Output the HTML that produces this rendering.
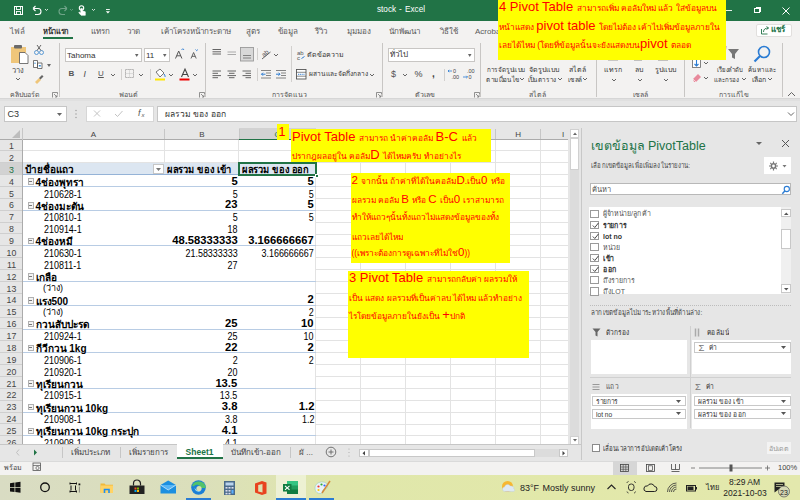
<!DOCTYPE html><html><head><meta charset="utf-8"><style>
*{box-sizing:border-box}
body{margin:0;width:800px;height:500px;overflow:hidden;position:relative;font-family:"Liberation Sans",sans-serif;background:#e6e6e6}
.ab{position:absolute}
.t{position:absolute;white-space:nowrap;line-height:1}
</style></head><body>
<div class="ab" style="left:0;top:0;width:800px;height:21px;background:#217346"></div>
<div class="t" style="left:377px;top:5.5px;font-size:8.2px;color:#fff">stock</div><div class="t" style="left:399px;top:5.5px;font-size:8.2px;color:#fff">-</div><div class="t" style="left:405px;top:5.5px;font-size:8.2px;color:#fff">Excel</div>
<div class="ab" style="left:754px;top:8px;width:5.5px;height:5px;border:1px solid #fff"></div><div class="ab" style="left:756px;top:6.5px;width:5px;height:5px;border-top:1px solid #fff;border-right:1px solid #fff"></div>
<svg class="ab" style="left:781px;top:5.5px" width="10" height="10"><path d="M1.5 1.5L8.5 8.5M8.5 1.5L1.5 8.5" stroke="#fff" stroke-width="1"/></svg>
<svg class="ab" style="left:0;top:0" width="120" height="21">
<rect x="14.5" y="6.5" width="8" height="8" fill="none" stroke="#fff" stroke-width="1"/>
<rect x="16.5" y="6.5" width="4" height="3" fill="none" stroke="#fff" stroke-width="0.9"/>
<rect x="16.5" y="11.5" width="4" height="3" fill="none" stroke="#fff" stroke-width="0.9"/>
<path d="M33 8.5h5a3 3 0 0 1 0 6h-3M33 8.5l2.5-2.5M33 8.5l2.5 2.5" fill="none" stroke="#fff" stroke-width="1.1"/>
<path d="M45 9l1.5 1.5L48 9" fill="none" stroke="#fff" stroke-width="0.8"/>
<path d="M67 8.5h-5a3 3 0 0 0 0 6h3M67 8.5l-2.5-2.5M67 8.5l-2.5 2.5" fill="none" stroke="#6fa488" stroke-width="1.1"/>
<path d="M70 9l1.5 1.5L73 9" fill="none" stroke="#6fa488" stroke-width="0.8"/>
<circle cx="81.5" cy="8" r="2.2" fill="none" stroke="#fff" stroke-width="1.1"/>
<path d="M80.8 8.5v4.5l-1.5-1l-0.5 0.8l2.3 2.5h4.2v-3.5l-3 -1v-2.3z" fill="#fff" stroke="#fff" stroke-width="0.6"/>
<path d="M92 9l1.5 1.5L95 9" fill="none" stroke="#fff" stroke-width="0.8"/>
<path d="M106 9.5h3.8" stroke="#fff" stroke-width="0.9"/><path d="M105.8 11.2h4.2l-2.1 2.2z" fill="#fff"/>
</svg>
<div class="ab" style="left:0;top:21px;width:800px;height:78px;background:#f3f2f1"></div>
<div class="t" style="left:10px;top:27.5px;font-size:8px;color:#5a5a5a">ไฟล์</div>
<div class="t" style="left:43px;top:27.5px;font-size:8px;color:#333;font-weight:bold;transform:scaleX(0.93);transform-origin:0 50%">หน้าแรก</div>
<div class="t" style="left:90.5px;top:27.5px;font-size:8px;color:#5a5a5a">แทรก</div>
<div class="t" style="left:126.5px;top:27.5px;font-size:8px;color:#5a5a5a">วาด</div>
<div class="t" style="left:161px;top:27.5px;font-size:8px;color:#5a5a5a">เค้าโครงหน้ากระดาษ</div>
<div class="t" style="left:246px;top:27.5px;font-size:8px;color:#5a5a5a">สูตร</div>
<div class="t" style="left:278px;top:27.5px;font-size:8px;color:#5a5a5a">ข้อมูล</div>
<div class="t" style="left:315px;top:27.5px;font-size:8px;color:#5a5a5a">รีวิว</div>
<div class="t" style="left:347px;top:27.5px;font-size:8px;color:#5a5a5a">มุมมอง</div>
<div class="t" style="left:389px;top:27.5px;font-size:8px;color:#5a5a5a">นักพัฒนา</div>
<div class="t" style="left:440px;top:27.5px;font-size:8px;color:#5a5a5a">วิธีใช้</div>
<div class="t" style="left:475px;top:27.5px;font-size:8px;color:#5a5a5a">Acrobat</div>
<div class="ab" style="left:42.5px;top:36.5px;width:30.5px;height:2px;background:#217346"></div>
<div class="ab" style="left:756px;top:23.5px;width:36px;height:13.5px;background:#fff;border:1px solid #e1dfdd;border-radius:2px"></div>
<svg class="ab" style="left:760px;top:25px" width="10" height="10"><path d="M1.5 4v5h6M3.5 7c0-3 2-4 5-4M6.5 1.5l2 1.5-2 1.5" fill="none" stroke="#217346" stroke-width="0.9"/></svg>
<div class="t" style="left:771px;top:26px;font-size:8px;color:#217346;font-weight:bold">แชร์</div>
<div class="ab" style="left:59px;top:43px;width:1px;height:54px;background:#c8c6c4"></div>
<div class="ab" style="left:204.5px;top:43px;width:1px;height:54px;background:#c8c6c4"></div>
<div class="ab" style="left:382px;top:43px;width:1px;height:54px;background:#c8c6c4"></div>
<div class="ab" style="left:479.5px;top:43px;width:1px;height:54px;background:#c8c6c4"></div>
<div class="ab" style="left:595.5px;top:43px;width:1px;height:54px;background:#c8c6c4"></div>
<div class="ab" style="left:684px;top:43px;width:1px;height:54px;background:#c8c6c4"></div>
<div class="ab" style="left:781.7px;top:43px;width:1px;height:54px;background:#c8c6c4"></div>
<div class="t" style="left:25px;top:91px;font-size:7px;color:#505050;transform:translateX(-50%);">คลิปบอร์ด</div>
<div class="t" style="left:128px;top:91px;font-size:7px;color:#505050;transform:translateX(-50%);">ฟอนต์</div>
<div class="t" style="left:289px;top:91px;font-size:7px;color:#505050;transform:translateX(-50%);">การจัดแนว</div>
<div class="t" style="left:425px;top:91px;font-size:7px;color:#505050;transform:translateX(-50%);">ตัวเลข</div>
<div class="t" style="left:537px;top:91px;font-size:7px;color:#505050;transform:translateX(-50%);">สไตล์</div>
<div class="t" style="left:640px;top:91px;font-size:7px;color:#505050;transform:translateX(-50%);">เซลล์</div>
<div class="t" style="left:734px;top:91px;font-size:7px;color:#505050;transform:translateX(-50%);">การแก้ไข</div>
<svg class="ab" style="left:52px;top:91.5px" width="6" height="6"><path d="M0.5 5.5v-5h5v2M2 2l3 3M5 3v2h-2" fill="none" stroke="#777" stroke-width="0.8"/></svg>
<svg class="ab" style="left:199px;top:91.5px" width="6" height="6"><path d="M0.5 5.5v-5h5v2M2 2l3 3M5 3v2h-2" fill="none" stroke="#777" stroke-width="0.8"/></svg>
<svg class="ab" style="left:376px;top:91.5px" width="6" height="6"><path d="M0.5 5.5v-5h5v2M2 2l3 3M5 3v2h-2" fill="none" stroke="#777" stroke-width="0.8"/></svg>
<svg class="ab" style="left:473.5px;top:91.5px" width="6" height="6"><path d="M0.5 5.5v-5h5v2M2 2l3 3M5 3v2h-2" fill="none" stroke="#777" stroke-width="0.8"/></svg>
<svg class="ab" style="left:0;top:40px" width="60" height="50">
<rect x="11" y="7" width="15" height="16" fill="#efc67a"/>
<rect x="14" y="5" width="8" height="3.5" rx="1" fill="#6a6a6a"/>
<path d="M19.5 12.5h5.5l3 3v8h-8.5z" fill="#fff" stroke="#555" stroke-width="0.8"/>
<path d="M34.5 12.5a2 2 0 1 0 4 0a2 2 0 1 0 -4 0M39.5 12.5a2 2 0 1 0 4 0a2 2 0 1 0 -4 0" fill="none" stroke="#4a90d0" stroke-width="0.9"/>
<path d="M37 10.5L41 5M41 10.5L37 5" stroke="#555" stroke-width="0.9"/>
<path d="M33.5 20.5h4v7h-4zM37.5 23h4.5v5.5h-4.5z" fill="#fff" stroke="#555" stroke-width="0.8"/>
<rect x="38.8" y="25" width="2" height="1.5" fill="#3b8fd6"/><rect x="34.5" y="22.5" width="1" height="1.5" fill="#3b8fd6"/>
<path d="M35 42l4 -4l2 2l-4 4z" fill="#efc67a"/><path d="M39 38l3 -3l1.5 1.5l-3 3z" fill="#666"/>
</svg>
<div class="t" style="left:17.5px;top:66.5px;font-size:7.5px;color:#444;transform:translateX(-50%);">วาง</div>
<svg class="ab" style="left:15px;top:77px" width="6" height="4"><path d="M1 1l2 2 2-2" fill="none" stroke="#555" stroke-width="0.9"/></svg>
<svg class="ab" style="left:47.0px;top:63.5px" width="4" height="3"><path d="M0 0h4l-2.0 3z" fill="#666"/></svg>
<div class="ab" style="left:65px;top:47.5px;width:76.5px;height:14px;background:#fff;border:1px solid #c8c6c4"></div>
<div class="t" style="left:67px;top:51.5px;font-size:8px;color:#333;">Tahoma</div>
<svg class="ab" style="left:135.25px;top:53.5px" width="3.5" height="3"><path d="M0 0h3.5l-1.75 3z" fill="#666"/></svg>
<div class="ab" style="left:143.5px;top:47.5px;width:26px;height:14px;background:#fff;border:1px solid #c8c6c4"></div>
<div class="t" style="left:146px;top:51.5px;font-size:8px;color:#333;">11</div>
<svg class="ab" style="left:163.25px;top:53.5px" width="3.5" height="3"><path d="M0 0h3.5l-1.75 3z" fill="#666"/></svg>
<svg class="ab" style="left:170px;top:45px" width="35" height="18">
<path d="M5.5 13.5l3.2 -7.5l3.2 7.5M6.7 10.8h4" fill="none" stroke="#555" stroke-width="1"/>
<path d="M11.5 5l1.3 -1.3l1.3 1.3" fill="none" stroke="#2b7cd3" stroke-width="0.9"/>
<path d="M21 13.5l2.6 -6l2.6 6M22 11.3h3.2" fill="none" stroke="#555" stroke-width="0.9"/>
<path d="M25.5 4.5l1.2 1.2l1.2 -1.2" fill="none" stroke="#2b7cd3" stroke-width="0.9"/>
</svg>
<div class="t" style="left:68.5px;top:70px;font-size:8px;color:#555;font-weight:bold;">B</div>
<div class="t" style="left:83.5px;top:69.5px;font-size:8.5px;color:#444;font-style:italic;font-family:"Liberation Serif",serif;font-weight:bold">I</div>
<div class="t" style="left:98px;top:70px;font-size:8px;color:#555;text-decoration:underline">U</div>
<svg class="ab" style="left:110px;top:73px" width="6" height="4"><path d="M1 1l2 2 2-2" fill="none" stroke="#555" stroke-width="0.9"/></svg>
<div class="ab" style="left:121px;top:69px;width:1px;height:11px;background:#d2d0ce"></div>
<svg class="ab" style="left:124px;top:68px" width="12" height="12"><rect x="1.5" y="1.5" width="8" height="8" fill="none" stroke="#888" stroke-width="0.8" stroke-dasharray="1.2 0.8"/><path d="M5.5 1.5v8M1.5 5.5h8" stroke="#aaa" stroke-width="0.6" stroke-dasharray="1 1"/></svg>
<svg class="ab" style="left:138px;top:73px" width="6" height="4"><path d="M1 1l2 2 2-2" fill="none" stroke="#555" stroke-width="0.9"/></svg>
<div class="ab" style="left:149.5px;top:69px;width:1px;height:11px;background:#d2d0ce"></div>
<svg class="ab" style="left:152px;top:66px" width="16" height="16"><path d="M4 6l4 -3l4 4l-4 4z" fill="#fff" stroke="#555" stroke-width="0.8"/><path d="M12 8c1 1.5 1.5 2.5 0.7 3" fill="none" stroke="#2b7cd3" stroke-width="1"/><rect x="3" y="12.5" width="10" height="2" fill="#ffe600"/></svg>
<svg class="ab" style="left:167.5px;top:73px" width="6" height="4"><path d="M1 1l2 2 2-2" fill="none" stroke="#555" stroke-width="0.9"/></svg>
<svg class="ab" style="left:178px;top:66px" width="14" height="16"><path d="M3.5 11l3.5 -8l3.5 8M4.8 8.5h4.4" fill="none" stroke="#444" stroke-width="1.1"/><rect x="1.5" y="12.5" width="10" height="2" fill="#e00"/></svg>
<svg class="ab" style="left:192px;top:73px" width="6" height="4"><path d="M1 1l2 2 2-2" fill="none" stroke="#555" stroke-width="0.9"/></svg>
<svg class="ab" style="left:205px;top:40px" width="180" height="50">
<path d="M7.5 9.5h8.5M7.5 11.8h8.5M7.5 14h8.5" stroke="#555" stroke-width="0.9"/>
<path d="M22.5 12h8.5M22.5 14.5h8.5" stroke="#aaa" stroke-width="1"/>
<rect x="35.5" y="7.5" width="13" height="13.5" fill="#d8d8d8" stroke="#9a9a9a" stroke-width="0.9"/>
<path d="M38 15.5h8M38 18h8" stroke="#777" stroke-width="0.9"/>
<path d="M7.5 31h8.5M7.5 33.3h5.5M7.5 35.6h8.5M7.5 37.7h5.5" stroke="#555" stroke-width="0.9"/>
<path d="M22.5 31h8.5M24 33.3h5.5M22.5 35.6h8.5M24 37.7h5.5" stroke="#555" stroke-width="0.9"/>
<path d="M37.5 31h8.5M40.5 33.3h5.5M37.5 35.6h8.5M40.5 37.7h5.5" stroke="#555" stroke-width="0.9"/>
<path d="M56 30.5h10M61 33h5M61 35.5h5M56 38h10" stroke="#777" stroke-width="0.9"/><path d="M56.5 34.2h4M58 32.7l-1.5 1.5l1.5 1.5" fill="none" stroke="#2b7cd3" stroke-width="1"/>
<path d="M71 30.5h10M76 33h5M76 35.5h5M71 38h10" stroke="#777" stroke-width="0.9"/><path d="M71 34.2h4M73.5 32.7l1.5 1.5l-1.5 1.5" fill="none" stroke="#2b7cd3" stroke-width="1"/>
<text x="92" y="15" font-size="6" fill="#555" font-family="Liberation Sans">ab</text>
<text x="92" y="19.5" font-size="6" fill="#555" font-family="Liberation Sans">c</text>
<path d="M96.5 18.5l3 -2" stroke="#2b7cd3" stroke-width="1"/>
<rect x="91.5" y="29.5" width="9.5" height="9.5" fill="#fff" stroke="#555" stroke-width="0.9"/>
<path d="M91.5 32.3h9.5M91.5 36.2h9.5" stroke="#555" stroke-width="0.7"/>
<path d="M93 34.3h6.5" stroke="#2b7cd3" stroke-width="0.9" stroke-dasharray="1.2 0.6"/>
</svg>
<div class="ab" style="left:256.6px;top:48px;width:1px;height:12px;background:#d2d0ce"></div>
<div class="ab" style="left:256.6px;top:68px;width:1px;height:13px;background:#d2d0ce"></div>
<div class="ab" style="left:290.8px;top:46px;width:1px;height:36px;background:#d2d0ce"></div>
<svg class="ab" style="left:259px;top:47px" width="14" height="14"><text x="2" y="9" font-size="6.5" fill="#555" font-family="Liberation Sans" transform="rotate(-40 5 6)">ab</text><path d="M3 12l8.5 -7" stroke="#555" stroke-width="0.9"/></svg>
<svg class="ab" style="left:273px;top:52.5px" width="6" height="4"><path d="M1 1l2 2 2-2" fill="none" stroke="#555" stroke-width="0.9"/></svg>
<div class="t" style="left:307px;top:51px;font-size:7px;color:#333;">ตัดข้อความ</div>
<div class="t" style="left:309px;top:71px;font-size:6.6px;color:#333;">ผสานและจัดกึ่งกลาง</div>
<svg class="ab" style="left:369px;top:73px" width="6" height="4"><path d="M1 1l2 2 2-2" fill="none" stroke="#555" stroke-width="0.9"/></svg>
<div class="ab" style="left:387.5px;top:47.5px;width:87px;height:14px;background:#fff;border:1px solid #c8c6c4"></div>
<div class="t" style="left:389.5px;top:50.5px;font-size:8px;color:#333;">ทั่วไป</div>
<svg class="ab" style="left:468.25px;top:53.5px" width="3.5" height="3"><path d="M0 0h3.5l-1.75 3z" fill="#666"/></svg>
<div class="t" style="left:391px;top:70px;font-size:9px;color:#555;">$</div>
<svg class="ab" style="left:402px;top:73px" width="6" height="4"><path d="M1 1l2 2 2-2" fill="none" stroke="#555" stroke-width="0.9"/></svg>
<div class="t" style="left:414.5px;top:70px;font-size:9px;color:#444;">%</div>
<div class="t" style="left:432px;top:69px;font-size:10px;color:#444;font-weight:bold;">,</div>
<div class="ab" style="left:443.5px;top:69px;width:1px;height:12px;background:#d2d0ce"></div>
<svg class="ab" style="left:447px;top:67px" width="30" height="14">
<text x="6" y="6" font-size="5.5" fill="#444" font-family="Liberation Sans">0</text><text x="4.5" y="11.5" font-size="5.5" fill="#444" font-family="Liberation Sans">.00</text>
<path d="M1 4h4M2.2 2.8L1 4l1.2 1.2" fill="none" stroke="#2b7cd3" stroke-width="0.8"/>
<text x="20" y="6" font-size="5.5" fill="#444" font-family="Liberation Sans">.00</text><text x="21.5" y="11.5" font-size="5.5" fill="#444" font-family="Liberation Sans">0</text>
<path d="M16 10h4.5M19.3 8.8l1.2 1.2l-1.2 1.2" fill="none" stroke="#2b7cd3" stroke-width="0.8"/>
</svg>
<div class="t" style="left:505.7px;top:66.0px;font-size:7px;color:#333;transform:translateX(-50%) scaleX(0.9);transform-origin:50% 50%;">การจัดรูปแบบ</div>
<div class="t" style="left:503px;top:75.5px;font-size:7px;color:#333;transform:translateX(-50%) scaleX(0.9);transform-origin:50% 50%;">ตามเงื่อนไข</div>
<svg class="ab" style="left:519px;top:77px" width="6" height="4"><path d="M1 1l2 2 2-2" fill="none" stroke="#555" stroke-width="0.9"/></svg>
<div class="t" style="left:544.3px;top:66.0px;font-size:7px;color:#333;transform:translateX(-50%);">จัดรูปแบบ</div>
<div class="t" style="left:541.5px;top:75.5px;font-size:7px;color:#333;transform:translateX(-50%) scaleX(0.9);transform-origin:50% 50%;">เป็นตาราง</div>
<svg class="ab" style="left:556.5px;top:77px" width="6" height="4"><path d="M1 1l2 2 2-2" fill="none" stroke="#555" stroke-width="0.9"/></svg>
<div class="t" style="left:577px;top:66.0px;font-size:7px;color:#333;transform:translateX(-50%);">สไตล์</div>
<div class="t" style="left:574.5px;top:75.5px;font-size:7px;color:#333;transform:translateX(-50%) scaleX(0.92);transform-origin:50% 50%;">เซลล์</div>
<svg class="ab" style="left:582px;top:77px" width="6" height="4"><path d="M1 1l2 2 2-2" fill="none" stroke="#555" stroke-width="0.9"/></svg>
<div class="t" style="left:613.3px;top:66.0px;font-size:7px;color:#333;transform:translateX(-50%);">แทรก</div>
<svg class="ab" style="left:610.5px;top:77.5px" width="6" height="4"><path d="M1 1l2 2 2-2" fill="none" stroke="#555" stroke-width="0.9"/></svg>
<div class="t" style="left:639.3px;top:66.0px;font-size:7px;color:#333;transform:translateX(-50%);">ลบ</div>
<svg class="ab" style="left:636.5px;top:77.5px" width="6" height="4"><path d="M1 1l2 2 2-2" fill="none" stroke="#555" stroke-width="0.9"/></svg>
<div class="t" style="left:665.8px;top:66.0px;font-size:7px;color:#333;transform:translateX(-50%);">รูปแบบ</div>
<svg class="ab" style="left:663px;top:77.5px" width="6" height="4"><path d="M1 1l2 2 2-2" fill="none" stroke="#555" stroke-width="0.9"/></svg>
<svg class="ab" style="left:600px;top:55px" width="85" height="8">
<path d="M8 5h10" stroke="#888" stroke-width="0.8"/>
<rect x="634" y="0" width="0" height="0"/>
<path d="M34 0v5h8v-5" fill="none" stroke="#777" stroke-width="0.8"/>
<path d="M58 0v5h10v-5M63 0v5" fill="none" stroke="#777" stroke-width="0.8"/>
</svg>
<svg class="ab" style="left:684px;top:40px" width="100" height="30">
<rect x="8.5" y="19.5" width="8" height="8" fill="#fff" stroke="#666" stroke-width="0.8"/>
<path d="M12.5 20v6M10.5 24l2 2l2-2" fill="none" stroke="#2b7cd3" stroke-width="1.1"/>
<path d="M44 9h11l-4 5v5l-3 -1.5v-3.5z" fill="#777"/>
<path d="M42 6l-1 8" stroke="#8e44ad" stroke-width="0.8"/>
<circle cx="80" cy="12" r="5.5" fill="none" stroke="#2b7cd3" stroke-width="1.6"/>
<path d="M76 16l-5.5 5.5" stroke="#2b7cd3" stroke-width="2.2"/>
</svg>
<svg class="ab" style="left:703px;top:61px" width="6" height="4"><path d="M1 1l2 2 2-2" fill="none" stroke="#555" stroke-width="0.9"/></svg>
<svg class="ab" style="left:690px;top:71px" width="14" height="12"><path d="M3 8l5 -5l3 3l-5 5h-2z" fill="#e88a9c"/><path d="M3 8l3 3" stroke="#fff" stroke-width="0.6"/></svg>
<svg class="ab" style="left:703px;top:76px" width="6" height="4"><path d="M1 1l2 2 2-2" fill="none" stroke="#555" stroke-width="0.9"/></svg>
<div class="t" style="left:729.5px;top:66.0px;font-size:7px;color:#333;transform:translateX(-50%) scaleX(0.85);transform-origin:50% 50%;">เรียงลำดับ</div>
<div class="t" style="left:726px;top:75.5px;font-size:7px;color:#333;transform:translateX(-50%) scaleX(0.88);transform-origin:50% 50%;">และกรอง</div>
<svg class="ab" style="left:741px;top:77px" width="6" height="4"><path d="M1 1l2 2 2-2" fill="none" stroke="#555" stroke-width="0.9"/></svg>
<div class="t" style="left:762px;top:66.0px;font-size:7px;color:#333;transform:translateX(-50%) scaleX(0.88);transform-origin:50% 50%;">ค้นหาและ</div>
<div class="t" style="left:759px;top:75.5px;font-size:7px;color:#333;transform:translateX(-50%);">เลือก</div>
<svg class="ab" style="left:767px;top:77px" width="6" height="4"><path d="M1 1l2 2 2-2" fill="none" stroke="#555" stroke-width="0.9"/></svg>
<svg class="ab" style="left:787px;top:91px" width="9" height="6"><path d="M1 5l3.5 -3.5l3.5 3.5" fill="none" stroke="#555" stroke-width="0.9"/></svg>
<div class="ab" style="left:0;top:98px;width:800px;height:1px;background:#d6d6d6"></div>
<div class="ab" style="left:0;top:99px;width:800px;height:2px;background:#e0e0e0"></div>
<div class="ab" style="left:3.5px;top:106px;width:63px;height:15.5px;background:#fff;border:1px solid #c6c6c6"></div>
<div class="t" style="left:7.5px;top:110px;font-size:9px;color:#333;">C3</div>
<svg class="ab" style="left:56.5px;top:112.5px" width="5" height="3"><path d="M0 0h5l-2.5 3z" fill="#666"/></svg>
<svg class="ab" style="left:74px;top:108px" width="4" height="12"><circle cx="2" cy="2.5" r="0.7" fill="#999"/><circle cx="2" cy="6" r="0.7" fill="#999"/><circle cx="2" cy="9.5" r="0.7" fill="#999"/></svg>
<div class="ab" style="left:85.5px;top:106px;width:68.5px;height:15.5px;background:#fff;border:1px solid #d6d6d6"></div>
<svg class="ab" style="left:92px;top:109px" width="60" height="10"><path d="M2 1.5l6 6M8 1.5l-6 6" stroke="#bbb" stroke-width="0.9"/><path d="M23 5l2.5 2.5l5 -5.5" fill="none" stroke="#bbb" stroke-width="0.9"/></svg>
<div class="t" style="left:138px;top:109px;font-size:9px;color:#555;font-style:italic;font-family:"Liberation Serif",serif">f</div>
<div class="t" style="left:141.5px;top:112px;font-size:6px;color:#555;font-style:italic;font-family:"Liberation Serif",serif">x</div>
<div class="ab" style="left:156.5px;top:106px;width:640.5px;height:15.5px;background:#fff;border:1px solid #c6c6c6"></div>
<div class="t" style="left:165px;top:110px;font-size:8.5px;color:#333;">ผลรวม ของ ออก</div>
<svg class="ab" style="left:787px;top:111px" width="8" height="6"><path d="M1 1.5l3 3l3 -3" fill="none" stroke="#555" stroke-width="0.9"/></svg>
<div class="ab" style="left:22.5px;top:139.5px;width:545.0px;height:304.7px;background:#fff;overflow:hidden" id="grid">
<div class="ab" style="left:0;top:10.88px;width:567.5px;height:1px;background:#e3e3e3"></div>
<div class="ab" style="left:0;top:22.75px;width:567.5px;height:1px;background:#e3e3e3"></div>
<div class="ab" style="left:0;top:34.62px;width:567.5px;height:1px;background:#e3e3e3"></div>
<div class="ab" style="left:0;top:46.50px;width:567.5px;height:1px;background:#e3e3e3"></div>
<div class="ab" style="left:0;top:58.38px;width:567.5px;height:1px;background:#e3e3e3"></div>
<div class="ab" style="left:0;top:70.25px;width:567.5px;height:1px;background:#e3e3e3"></div>
<div class="ab" style="left:0;top:82.12px;width:567.5px;height:1px;background:#e3e3e3"></div>
<div class="ab" style="left:0;top:94.00px;width:567.5px;height:1px;background:#e3e3e3"></div>
<div class="ab" style="left:0;top:105.88px;width:567.5px;height:1px;background:#e3e3e3"></div>
<div class="ab" style="left:0;top:117.75px;width:567.5px;height:1px;background:#e3e3e3"></div>
<div class="ab" style="left:0;top:129.62px;width:567.5px;height:1px;background:#e3e3e3"></div>
<div class="ab" style="left:0;top:141.50px;width:567.5px;height:1px;background:#e3e3e3"></div>
<div class="ab" style="left:0;top:153.38px;width:567.5px;height:1px;background:#e3e3e3"></div>
<div class="ab" style="left:0;top:165.25px;width:567.5px;height:1px;background:#e3e3e3"></div>
<div class="ab" style="left:0;top:177.12px;width:567.5px;height:1px;background:#e3e3e3"></div>
<div class="ab" style="left:0;top:189.00px;width:567.5px;height:1px;background:#e3e3e3"></div>
<div class="ab" style="left:0;top:200.88px;width:567.5px;height:1px;background:#e3e3e3"></div>
<div class="ab" style="left:0;top:212.75px;width:567.5px;height:1px;background:#e3e3e3"></div>
<div class="ab" style="left:0;top:224.62px;width:567.5px;height:1px;background:#e3e3e3"></div>
<div class="ab" style="left:0;top:236.50px;width:567.5px;height:1px;background:#e3e3e3"></div>
<div class="ab" style="left:0;top:248.38px;width:567.5px;height:1px;background:#e3e3e3"></div>
<div class="ab" style="left:0;top:260.25px;width:567.5px;height:1px;background:#e3e3e3"></div>
<div class="ab" style="left:0;top:272.12px;width:567.5px;height:1px;background:#e3e3e3"></div>
<div class="ab" style="left:0;top:284.00px;width:567.5px;height:1px;background:#e3e3e3"></div>
<div class="ab" style="left:0;top:295.88px;width:567.5px;height:1px;background:#e3e3e3"></div>
<div class="ab" style="left:0;top:307.75px;width:567.5px;height:1px;background:#e3e3e3"></div>
<div class="ab" style="left:141.00px;top:0;width:1px;height:400px;background:#e3e3e3"></div>
<div class="ab" style="left:215.50px;top:0;width:1px;height:400px;background:#e3e3e3"></div>
<div class="ab" style="left:292.10px;top:0;width:1px;height:400px;background:#e3e3e3"></div>
<div class="ab" style="left:337.10px;top:0;width:1px;height:400px;background:#e3e3e3"></div>
<div class="ab" style="left:382.00px;top:0;width:1px;height:400px;background:#e3e3e3"></div>
<div class="ab" style="left:427.00px;top:0;width:1px;height:400px;background:#e3e3e3"></div>
<div class="ab" style="left:472.10px;top:0;width:1px;height:400px;background:#e3e3e3"></div>
<div class="ab" style="left:517.10px;top:0;width:1px;height:400px;background:#e3e3e3"></div>
<div class="ab" style="left:562.10px;top:0;width:1px;height:400px;background:#e3e3e3"></div>
<div class="ab" style="left:0;top:34.62px;width:292.1px;height:275.12px;background:#fff"></div>
</div>
<div class="ab" style="left:22.5px;top:162.75px;width:293.1px;height:11.88px;background:#dce6f1;border-bottom:1px solid #95b3d7"></div>
<div class="ab" style="left:22.5px;top:186.00px;width:293.1px;height:1px;background:#b8cce4"></div>
<div class="ab" style="left:27.5px;top:178.32px;width:6.5px;height:6.5px;border:1px solid #b0b0b0;background:#f4f4f4"></div>
<div class="ab" style="left:29.2px;top:181.03px;width:3px;height:1px;background:#777"></div>
<div class="t" style="left:35.5px;top:177.925px;font-size:10px;color:#000;font-weight:bold;">4ช่องพุทรา</div>
<div class="t" style="right:562.50px;top:176.72px;color:#000;font-size:10.4px;font-weight:bold;transform:scaleX(1.08);transform-origin:100% 50%;">5</div>
<div class="t" style="right:486.00px;top:176.72px;color:#000;font-size:10.4px;font-weight:bold;transform:scaleX(1.08);transform-origin:100% 50%;">5</div>
<div class="t" style="left:43.5px;top:189.5px;font-size:10.4px;color:#000;transform:scaleX(0.86);transform-origin:0 50%;">210628-1</div>
<div class="t" style="right:562.50px;top:189.50px;color:#000;font-size:10.4px;transform:scaleX(0.86);transform-origin:100% 50%;">5</div>
<div class="t" style="right:486.00px;top:189.50px;color:#000;font-size:10.4px;transform:scaleX(0.86);transform-origin:100% 50%;">5</div>
<div class="ab" style="left:22.5px;top:209.75px;width:293.1px;height:1px;background:#b8cce4"></div>
<div class="ab" style="left:27.5px;top:202.07px;width:6.5px;height:6.5px;border:1px solid #b0b0b0;background:#f4f4f4"></div>
<div class="ab" style="left:29.2px;top:204.78px;width:3px;height:1px;background:#777"></div>
<div class="t" style="left:35.5px;top:201.675px;font-size:10px;color:#000;font-weight:bold;">4ช่องมะตัน</div>
<div class="t" style="right:562.50px;top:200.47px;color:#000;font-size:10.4px;font-weight:bold;transform:scaleX(1.08);transform-origin:100% 50%;">23</div>
<div class="t" style="right:486.00px;top:200.47px;color:#000;font-size:10.4px;font-weight:bold;transform:scaleX(1.08);transform-origin:100% 50%;">5</div>
<div class="t" style="left:43.5px;top:213.25px;font-size:10.4px;color:#000;transform:scaleX(0.86);transform-origin:0 50%;">210810-1</div>
<div class="t" style="right:562.50px;top:213.25px;color:#000;font-size:10.4px;transform:scaleX(0.86);transform-origin:100% 50%;">5</div>
<div class="t" style="right:486.00px;top:213.25px;color:#000;font-size:10.4px;transform:scaleX(0.86);transform-origin:100% 50%;">5</div>
<div class="t" style="left:43.5px;top:225.125px;font-size:10.4px;color:#000;transform:scaleX(0.86);transform-origin:0 50%;">210914-1</div>
<div class="t" style="right:562.50px;top:225.12px;color:#000;font-size:10.4px;transform:scaleX(0.86);transform-origin:100% 50%;">18</div>
<div class="ab" style="left:22.5px;top:245.38px;width:293.1px;height:1px;background:#b8cce4"></div>
<div class="ab" style="left:27.5px;top:237.70px;width:6.5px;height:6.5px;border:1px solid #b0b0b0;background:#f4f4f4"></div>
<div class="ab" style="left:29.2px;top:240.40px;width:3px;height:1px;background:#777"></div>
<div class="t" style="left:35.5px;top:237.3px;font-size:10px;color:#000;font-weight:bold;">4ช่องหมี</div>
<div class="t" style="right:562.50px;top:236.10px;color:#000;font-size:10.4px;font-weight:bold;transform:scaleX(1.08);transform-origin:100% 50%;">48.58333333</div>
<div class="t" style="right:486.00px;top:236.10px;color:#000;font-size:10.4px;font-weight:bold;transform:scaleX(1.08);transform-origin:100% 50%;">3.166666667</div>
<div class="t" style="left:43.5px;top:248.875px;font-size:10.4px;color:#000;transform:scaleX(0.86);transform-origin:0 50%;">210630-1</div>
<div class="t" style="right:562.50px;top:248.88px;color:#000;font-size:10.4px;transform:scaleX(0.86);transform-origin:100% 50%;">21.58333333</div>
<div class="t" style="right:486.00px;top:248.88px;color:#000;font-size:10.4px;transform:scaleX(0.86);transform-origin:100% 50%;">3.166666667</div>
<div class="t" style="left:43.5px;top:260.75px;font-size:10.4px;color:#000;transform:scaleX(0.86);transform-origin:0 50%;">210811-1</div>
<div class="t" style="right:562.50px;top:260.75px;color:#000;font-size:10.4px;transform:scaleX(0.86);transform-origin:100% 50%;">27</div>
<div class="ab" style="left:22.5px;top:281.00px;width:293.1px;height:1px;background:#b8cce4"></div>
<div class="ab" style="left:27.5px;top:273.32px;width:6.5px;height:6.5px;border:1px solid #b0b0b0;background:#f4f4f4"></div>
<div class="ab" style="left:29.2px;top:276.02px;width:3px;height:1px;background:#777"></div>
<div class="t" style="left:35.5px;top:272.925px;font-size:10px;color:#000;font-weight:bold;">เกลือ</div>
<div class="t" style="left:43px;top:284.0px;font-size:9px;color:#000;">(ว่าง)</div>
<div class="ab" style="left:22.5px;top:304.75px;width:293.1px;height:1px;background:#b8cce4"></div>
<div class="ab" style="left:27.5px;top:297.07px;width:6.5px;height:6.5px;border:1px solid #b0b0b0;background:#f4f4f4"></div>
<div class="ab" style="left:29.2px;top:299.77px;width:3px;height:1px;background:#777"></div>
<div class="t" style="left:35.5px;top:296.675px;font-size:10px;color:#000;font-weight:bold;">แรง500</div>
<div class="t" style="right:486.00px;top:295.48px;color:#000;font-size:10.4px;font-weight:bold;transform:scaleX(1.08);transform-origin:100% 50%;">2</div>
<div class="t" style="left:43px;top:307.75px;font-size:9px;color:#000;">(ว่าง)</div>
<div class="t" style="right:486.00px;top:308.25px;color:#000;font-size:10.4px;transform:scaleX(0.86);transform-origin:100% 50%;">2</div>
<div class="ab" style="left:22.5px;top:328.50px;width:293.1px;height:1px;background:#b8cce4"></div>
<div class="ab" style="left:27.5px;top:320.82px;width:6.5px;height:6.5px;border:1px solid #b0b0b0;background:#f4f4f4"></div>
<div class="ab" style="left:29.2px;top:323.52px;width:3px;height:1px;background:#777"></div>
<div class="t" style="left:35.5px;top:320.425px;font-size:10px;color:#000;font-weight:bold;">กวนสับปะรด</div>
<div class="t" style="right:562.50px;top:319.23px;color:#000;font-size:10.4px;font-weight:bold;transform:scaleX(1.08);transform-origin:100% 50%;">25</div>
<div class="t" style="right:486.00px;top:319.23px;color:#000;font-size:10.4px;font-weight:bold;transform:scaleX(1.08);transform-origin:100% 50%;">10</div>
<div class="t" style="left:43.5px;top:332.0px;font-size:10.4px;color:#000;transform:scaleX(0.86);transform-origin:0 50%;">210924-1</div>
<div class="t" style="right:562.50px;top:332.00px;color:#000;font-size:10.4px;transform:scaleX(0.86);transform-origin:100% 50%;">25</div>
<div class="t" style="right:486.00px;top:332.00px;color:#000;font-size:10.4px;transform:scaleX(0.86);transform-origin:100% 50%;">10</div>
<div class="ab" style="left:22.5px;top:352.25px;width:293.1px;height:1px;background:#b8cce4"></div>
<div class="ab" style="left:27.5px;top:344.57px;width:6.5px;height:6.5px;border:1px solid #b0b0b0;background:#f4f4f4"></div>
<div class="ab" style="left:29.2px;top:347.27px;width:3px;height:1px;background:#777"></div>
<div class="t" style="left:35.5px;top:344.175px;font-size:10px;color:#000;font-weight:bold;">กีวีกวน 1kg</div>
<div class="t" style="right:562.50px;top:342.98px;color:#000;font-size:10.4px;font-weight:bold;transform:scaleX(1.08);transform-origin:100% 50%;">22</div>
<div class="t" style="right:486.00px;top:342.98px;color:#000;font-size:10.4px;font-weight:bold;transform:scaleX(1.08);transform-origin:100% 50%;">2</div>
<div class="t" style="left:43.5px;top:355.75px;font-size:10.4px;color:#000;transform:scaleX(0.86);transform-origin:0 50%;">210906-1</div>
<div class="t" style="right:562.50px;top:355.75px;color:#000;font-size:10.4px;transform:scaleX(0.86);transform-origin:100% 50%;">2</div>
<div class="t" style="right:486.00px;top:355.75px;color:#000;font-size:10.4px;transform:scaleX(0.86);transform-origin:100% 50%;">2</div>
<div class="t" style="left:43.5px;top:367.625px;font-size:10.4px;color:#000;transform:scaleX(0.86);transform-origin:0 50%;">210920-1</div>
<div class="t" style="right:562.50px;top:367.62px;color:#000;font-size:10.4px;transform:scaleX(0.86);transform-origin:100% 50%;">20</div>
<div class="ab" style="left:22.5px;top:387.88px;width:293.1px;height:1px;background:#b8cce4"></div>
<div class="ab" style="left:27.5px;top:380.20px;width:6.5px;height:6.5px;border:1px solid #b0b0b0;background:#f4f4f4"></div>
<div class="ab" style="left:29.2px;top:382.90px;width:3px;height:1px;background:#777"></div>
<div class="t" style="left:35.5px;top:379.8px;font-size:10px;color:#000;font-weight:bold;">ทุเรียนกวน</div>
<div class="t" style="right:562.50px;top:378.60px;color:#000;font-size:10.4px;font-weight:bold;transform:scaleX(1.08);transform-origin:100% 50%;">13.5</div>
<div class="t" style="left:43.5px;top:391.375px;font-size:10.4px;color:#000;transform:scaleX(0.86);transform-origin:0 50%;">210915-1</div>
<div class="t" style="right:562.50px;top:391.38px;color:#000;font-size:10.4px;transform:scaleX(0.86);transform-origin:100% 50%;">13.5</div>
<div class="ab" style="left:22.5px;top:411.62px;width:293.1px;height:1px;background:#b8cce4"></div>
<div class="ab" style="left:27.5px;top:403.95px;width:6.5px;height:6.5px;border:1px solid #b0b0b0;background:#f4f4f4"></div>
<div class="ab" style="left:29.2px;top:406.65px;width:3px;height:1px;background:#777"></div>
<div class="t" style="left:35.5px;top:403.55px;font-size:10px;color:#000;font-weight:bold;">ทุเรียนกวน 10kg</div>
<div class="t" style="right:562.50px;top:402.35px;color:#000;font-size:10.4px;font-weight:bold;transform:scaleX(1.08);transform-origin:100% 50%;">3.8</div>
<div class="t" style="right:486.00px;top:402.35px;color:#000;font-size:10.4px;font-weight:bold;transform:scaleX(1.08);transform-origin:100% 50%;">1.2</div>
<div class="t" style="left:43.5px;top:415.125px;font-size:10.4px;color:#000;transform:scaleX(0.86);transform-origin:0 50%;">210908-1</div>
<div class="t" style="right:562.50px;top:415.12px;color:#000;font-size:10.4px;transform:scaleX(0.86);transform-origin:100% 50%;">3.8</div>
<div class="t" style="right:486.00px;top:415.12px;color:#000;font-size:10.4px;transform:scaleX(0.86);transform-origin:100% 50%;">1.2</div>
<div class="ab" style="left:22.5px;top:435.38px;width:293.1px;height:1px;background:#b8cce4"></div>
<div class="ab" style="left:27.5px;top:427.70px;width:6.5px;height:6.5px;border:1px solid #b0b0b0;background:#f4f4f4"></div>
<div class="ab" style="left:29.2px;top:430.40px;width:3px;height:1px;background:#777"></div>
<div class="t" style="left:35.5px;top:427.3px;font-size:10px;color:#000;font-weight:bold;">ทุเรียนกวน 10kg กระปุก</div>
<div class="t" style="right:562.50px;top:426.10px;color:#000;font-size:10.4px;font-weight:bold;transform:scaleX(1.08);transform-origin:100% 50%;">4.1</div>
<div class="t" style="left:43.5px;top:438.875px;font-size:10.4px;color:#000;transform:scaleX(0.86);transform-origin:0 50%;">210908-1</div>
<div class="t" style="right:562.50px;top:438.88px;color:#000;font-size:10.4px;transform:scaleX(0.86);transform-origin:100% 50%;">4.1</div>
<div class="t" style="left:25px;top:165.25px;font-size:10px;color:#000;font-weight:bold;">ป้ายชื่อแถว</div>
<div class="ab" style="left:153px;top:163.75px;width:11px;height:10.5px;background:#fff;border:1px solid #c6c6c6"></div>
<svg class="ab" style="left:156.0px;top:167.55px" width="5" height="3"><path d="M0 0h5l-2.5 3z" fill="#777"/></svg>
<div class="t" style="left:167px;top:165.25px;font-size:10px;color:#000;transform:scaleX(0.93);transform-origin:0 50%;font-weight:bold;">ผลรวม ของ เข้า</div>
<div class="t" style="left:242px;top:165.25px;font-size:10px;color:#000;transform:scaleX(0.93);transform-origin:0 50%;font-weight:bold;">ผลรวม ของ ออก</div>
<div class="ab" style="left:238.3px;top:162.25px;width:78.5px;height:13.38px;border:2px solid #217346"></div>
<div class="ab" style="left:314.5px;top:173.62px;width:4px;height:4px;background:#217346;border:1px solid #fff"></div>
<div class="ab" style="left:0;top:128px;width:567.5px;height:11.5px;background:#e6e6e6;border-bottom:1px solid #ababab"></div>
<div class="ab" style="left:239px;top:128px;width:76.6px;height:11.5px;background:#d2d2d2;border-bottom:1.5px solid #217346"></div>
<div class="ab" style="left:164.00px;top:129px;width:1px;height:10px;background:#c6c6c6"></div>
<div class="t" style="left:93.5px;top:130.5px;font-size:8px;color:#444;transform:translateX(-50%)">A</div>
<div class="ab" style="left:238.50px;top:129px;width:1px;height:10px;background:#c6c6c6"></div>
<div class="t" style="left:201.8px;top:130.5px;font-size:8px;color:#444;transform:translateX(-50%)">B</div>
<div class="ab" style="left:315.10px;top:129px;width:1px;height:10px;background:#c6c6c6"></div>
<div class="t" style="left:277.3px;top:130.5px;font-size:8px;color:#217346;transform:translateX(-50%)">C</div>
<div class="ab" style="left:360.10px;top:129px;width:1px;height:10px;background:#c6c6c6"></div>
<div class="t" style="left:338.1px;top:130.5px;font-size:8px;color:#444;transform:translateX(-50%)">D</div>
<div class="ab" style="left:405.00px;top:129px;width:1px;height:10px;background:#c6c6c6"></div>
<div class="t" style="left:383.1px;top:130.5px;font-size:8px;color:#444;transform:translateX(-50%)">E</div>
<div class="ab" style="left:450.00px;top:129px;width:1px;height:10px;background:#c6c6c6"></div>
<div class="t" style="left:428.0px;top:130.5px;font-size:8px;color:#444;transform:translateX(-50%)">F</div>
<div class="ab" style="left:495.10px;top:129px;width:1px;height:10px;background:#c6c6c6"></div>
<div class="t" style="left:473.1px;top:130.5px;font-size:8px;color:#444;transform:translateX(-50%)">G</div>
<div class="ab" style="left:540.10px;top:129px;width:1px;height:10px;background:#c6c6c6"></div>
<div class="t" style="left:518.1px;top:130.5px;font-size:8px;color:#444;transform:translateX(-50%)">H</div>
<div class="t" style="left:563.1px;top:130.5px;font-size:8px;color:#444;transform:translateX(-50%)">I</div>
<svg class="ab" style="left:12px;top:130px" width="9" height="9"><path d="M8 0v8h-8z" fill="#bdbdbd"/></svg>
<div class="ab" style="left:22px;top:128px;width:1px;height:11.5px;background:#c6c6c6"></div>
<div class="ab" style="left:0;top:139.5px;width:22.5px;height:304.7px;background:#e6e6e6;border-right:1px solid #ababab;overflow:hidden">
<div class="ab" style="left:0;top:0.00px;width:22.5px;height:11.88px;background:transparent;border-bottom:1px solid #cfcfcf"></div>
<div class="t" style="left:11.5px;top:2.60px;font-size:8.8px;color:#444;transform:translateX(-50%)">1</div>
<div class="ab" style="left:0;top:11.88px;width:22.5px;height:11.88px;background:transparent;border-bottom:1px solid #cfcfcf"></div>
<div class="t" style="left:11.5px;top:14.47px;font-size:8.8px;color:#444;transform:translateX(-50%)">2</div>
<div class="ab" style="left:0;top:23.75px;width:22.5px;height:11.88px;background:#d2d2d2;border-right:1.5px solid #217346;border-bottom:1px solid #cfcfcf"></div>
<div class="t" style="left:11.5px;top:26.35px;font-size:8.8px;color:#217346;transform:translateX(-50%)">3</div>
<div class="ab" style="left:0;top:35.62px;width:22.5px;height:11.88px;background:transparent;border-bottom:1px solid #cfcfcf"></div>
<div class="t" style="left:11.5px;top:38.23px;font-size:8.8px;color:#444;transform:translateX(-50%)">4</div>
<div class="ab" style="left:0;top:47.50px;width:22.5px;height:11.88px;background:transparent;border-bottom:1px solid #cfcfcf"></div>
<div class="t" style="left:11.5px;top:50.10px;font-size:8.8px;color:#444;transform:translateX(-50%)">5</div>
<div class="ab" style="left:0;top:59.38px;width:22.5px;height:11.88px;background:transparent;border-bottom:1px solid #cfcfcf"></div>
<div class="t" style="left:11.5px;top:61.98px;font-size:8.8px;color:#444;transform:translateX(-50%)">6</div>
<div class="ab" style="left:0;top:71.25px;width:22.5px;height:11.88px;background:transparent;border-bottom:1px solid #cfcfcf"></div>
<div class="t" style="left:11.5px;top:73.85px;font-size:8.8px;color:#444;transform:translateX(-50%)">7</div>
<div class="ab" style="left:0;top:83.12px;width:22.5px;height:11.88px;background:transparent;border-bottom:1px solid #cfcfcf"></div>
<div class="t" style="left:11.5px;top:85.72px;font-size:8.8px;color:#444;transform:translateX(-50%)">8</div>
<div class="ab" style="left:0;top:95.00px;width:22.5px;height:11.88px;background:transparent;border-bottom:1px solid #cfcfcf"></div>
<div class="t" style="left:11.5px;top:97.60px;font-size:8.8px;color:#444;transform:translateX(-50%)">9</div>
<div class="ab" style="left:0;top:106.88px;width:22.5px;height:11.88px;background:transparent;border-bottom:1px solid #cfcfcf"></div>
<div class="t" style="left:11.5px;top:109.47px;font-size:8.8px;color:#444;transform:translateX(-50%)">10</div>
<div class="ab" style="left:0;top:118.75px;width:22.5px;height:11.88px;background:transparent;border-bottom:1px solid #cfcfcf"></div>
<div class="t" style="left:11.5px;top:121.35px;font-size:8.8px;color:#444;transform:translateX(-50%)">11</div>
<div class="ab" style="left:0;top:130.62px;width:22.5px;height:11.88px;background:transparent;border-bottom:1px solid #cfcfcf"></div>
<div class="t" style="left:11.5px;top:133.22px;font-size:8.8px;color:#444;transform:translateX(-50%)">12</div>
<div class="ab" style="left:0;top:142.50px;width:22.5px;height:11.88px;background:transparent;border-bottom:1px solid #cfcfcf"></div>
<div class="t" style="left:11.5px;top:145.10px;font-size:8.8px;color:#444;transform:translateX(-50%)">13</div>
<div class="ab" style="left:0;top:154.38px;width:22.5px;height:11.88px;background:transparent;border-bottom:1px solid #cfcfcf"></div>
<div class="t" style="left:11.5px;top:156.97px;font-size:8.8px;color:#444;transform:translateX(-50%)">14</div>
<div class="ab" style="left:0;top:166.25px;width:22.5px;height:11.88px;background:transparent;border-bottom:1px solid #cfcfcf"></div>
<div class="t" style="left:11.5px;top:168.85px;font-size:8.8px;color:#444;transform:translateX(-50%)">15</div>
<div class="ab" style="left:0;top:178.12px;width:22.5px;height:11.88px;background:transparent;border-bottom:1px solid #cfcfcf"></div>
<div class="t" style="left:11.5px;top:180.72px;font-size:8.8px;color:#444;transform:translateX(-50%)">16</div>
<div class="ab" style="left:0;top:190.00px;width:22.5px;height:11.88px;background:transparent;border-bottom:1px solid #cfcfcf"></div>
<div class="t" style="left:11.5px;top:192.60px;font-size:8.8px;color:#444;transform:translateX(-50%)">17</div>
<div class="ab" style="left:0;top:201.88px;width:22.5px;height:11.88px;background:transparent;border-bottom:1px solid #cfcfcf"></div>
<div class="t" style="left:11.5px;top:204.47px;font-size:8.8px;color:#444;transform:translateX(-50%)">18</div>
<div class="ab" style="left:0;top:213.75px;width:22.5px;height:11.88px;background:transparent;border-bottom:1px solid #cfcfcf"></div>
<div class="t" style="left:11.5px;top:216.35px;font-size:8.8px;color:#444;transform:translateX(-50%)">19</div>
<div class="ab" style="left:0;top:225.62px;width:22.5px;height:11.88px;background:transparent;border-bottom:1px solid #cfcfcf"></div>
<div class="t" style="left:11.5px;top:228.22px;font-size:8.8px;color:#444;transform:translateX(-50%)">20</div>
<div class="ab" style="left:0;top:237.50px;width:22.5px;height:11.88px;background:transparent;border-bottom:1px solid #cfcfcf"></div>
<div class="t" style="left:11.5px;top:240.10px;font-size:8.8px;color:#444;transform:translateX(-50%)">21</div>
<div class="ab" style="left:0;top:249.38px;width:22.5px;height:11.88px;background:transparent;border-bottom:1px solid #cfcfcf"></div>
<div class="t" style="left:11.5px;top:251.97px;font-size:8.8px;color:#444;transform:translateX(-50%)">22</div>
<div class="ab" style="left:0;top:261.25px;width:22.5px;height:11.88px;background:transparent;border-bottom:1px solid #cfcfcf"></div>
<div class="t" style="left:11.5px;top:263.85px;font-size:8.8px;color:#444;transform:translateX(-50%)">23</div>
<div class="ab" style="left:0;top:273.12px;width:22.5px;height:11.88px;background:transparent;border-bottom:1px solid #cfcfcf"></div>
<div class="t" style="left:11.5px;top:275.73px;font-size:8.8px;color:#444;transform:translateX(-50%)">24</div>
<div class="ab" style="left:0;top:285.00px;width:22.5px;height:11.88px;background:transparent;border-bottom:1px solid #cfcfcf"></div>
<div class="t" style="left:11.5px;top:287.60px;font-size:8.8px;color:#444;transform:translateX(-50%)">25</div>
<div class="ab" style="left:0;top:296.88px;width:22.5px;height:11.88px;background:transparent;border-bottom:1px solid #cfcfcf"></div>
<div class="t" style="left:11.5px;top:299.48px;font-size:8.8px;color:#444;transform:translateX(-50%)">26</div>
</div>
<div class="ab" style="left:567.5px;top:128px;width:14px;height:332.2px;background:#e6e6e6"></div>
<div class="ab" style="left:570.4px;top:129.3px;width:9px;height:9px;background:#fff;border:1px solid #d0d0d0"></div>
<svg class="ab" style="left:572.9px;top:132px" width="4" height="3"><path d="M0 3h4l-2 -2.5z" fill="#666"/></svg>
<div class="ab" style="left:570.4px;top:138.3px;width:9px;height:32px;background:#fff;border:1px solid #d0d0d0"></div>
<div class="ab" style="left:570.4px;top:170.3px;width:9px;height:266px;background:#dcdcdc"></div>
<div class="ab" style="left:570.4px;top:436px;width:9px;height:8.5px;background:#fff;border:1px solid #d0d0d0"></div>
<svg class="ab" style="left:572.9px;top:439px" width="4" height="3"><path d="M0 0h4l-2 2.5z" fill="#666"/></svg>
<div class="ab" style="left:0;top:444.2px;width:582px;height:16.30000000000001px;background:#e6e6e6;border-top:1px solid #c6c6c6"></div>
<svg class="ab" style="left:15px;top:448px" width="25" height="9"><path d="M4 1.5l-2.5 3l2.5 3" fill="none" stroke="#bbb" stroke-width="0.9"/><path d="M19 1.5l3 3l-3 3z" fill="#217346"/></svg>
<div class="ab" style="left:62px;top:447px;width:1px;height:11px;background:#c6c6c6"></div>
<div class="ab" style="left:119.5px;top:447px;width:1px;height:11px;background:#c6c6c6"></div>
<div class="ab" style="left:290px;top:447px;width:1px;height:11px;background:#c6c6c6"></div>
<div class="t" style="left:90.5px;top:448.5px;font-size:8px;color:#444;transform:translateX(-50%);">เพิ่มประเภท</div>
<div class="t" style="left:148.5px;top:448.5px;font-size:8px;color:#444;transform:translateX(-50%);">เพิ่มรายการ</div>
<div class="ab" style="left:177px;top:444px;width:45.5px;height:15px;background:#fff;border-bottom:2px solid #217346"></div>
<div class="t" style="left:199.5px;top:448px;font-size:8.5px;color:#217346;transform:translateX(-50%);font-weight:bold;">Sheet1</div>
<div class="t" style="left:256px;top:448.5px;font-size:8px;color:#444;transform:translateX(-50%);">บันทึกเข้า-ออก</div>
<div class="t" style="left:299px;top:448.5px;font-size:8px;color:#444;">ผั ...</div>
<svg class="ab" style="left:325px;top:446px" width="12" height="12"><circle cx="6" cy="6" r="4.8" fill="none" stroke="#666" stroke-width="0.9"/><path d="M6 3.5v5M3.5 6h5" stroke="#666" stroke-width="0.9"/></svg>
<svg class="ab" style="left:347px;top:447px" width="4" height="11"><circle cx="2" cy="2" r="0.6" fill="#aaa"/><circle cx="2" cy="5.5" r="0.6" fill="#aaa"/><circle cx="2" cy="9" r="0.6" fill="#aaa"/></svg>
<div class="ab" style="left:359.4px;top:448.7px;width:208px;height:8.3px;background:#dcdcdc"></div>
<div class="ab" style="left:359.4px;top:448.7px;width:9.5px;height:8.3px;background:#fff;border:1px solid #c8c8c8"></div>
<svg class="ab" style="left:362px;top:450.7px" width="4" height="5"><path d="M3 0v4.5l-2.5 -2.25z" fill="#444"/></svg>
<div class="ab" style="left:368.7px;top:448.7px;width:166px;height:8.3px;background:#fff;border:1px solid #c8c8c8"></div>
<div class="ab" style="left:558.7px;top:448.7px;width:9px;height:8.3px;background:#fff;border:1px solid #c8c8c8"></div>
<svg class="ab" style="left:561.5px;top:450.7px" width="4" height="5"><path d="M0.5 0v4.5l2.5 -2.25z" fill="#444"/></svg>
<div class="ab" style="left:0;top:460.5px;width:800px;height:14.5px;background:#f3f2f1;border-top:1px solid #dadada"></div>
<div class="t" style="left:4px;top:464px;font-size:7px;color:#444;">พร้อม</div>
<svg class="ab" style="left:32px;top:462px" width="10" height="10"><rect x="1" y="1" width="7.5" height="7.5" fill="none" stroke="#555" stroke-width="0.8"/><path d="M1 3.5h7.5" stroke="#555" stroke-width="0.7"/><circle cx="5.5" cy="6" r="1.6" fill="none" stroke="#555" stroke-width="0.7"/></svg>
<div class="ab" style="left:613px;top:461px;width:24px;height:14px;background:#d6d6d6"></div>
<svg class="ab" style="left:600px;top:461px" width="200" height="14">
<rect x="20.5" y="3.5" width="8" height="7" fill="none" stroke="#444" stroke-width="0.8"/><path d="M20.5 6h8M20.5 8.3h8M23.2 3.5v7M25.8 3.5v7" stroke="#444" stroke-width="0.6"/>
<rect x="46.5" y="3.5" width="8" height="7" fill="none" stroke="#444" stroke-width="0.8"/><rect x="48.5" y="4.8" width="4" height="4.5" fill="none" stroke="#444" stroke-width="0.7"/>
<path d="M71.5 3v5.5h8v-5.5M71.5 10.5h8M75.5 3v5.5" fill="none" stroke="#444" stroke-width="0.8"/>
<path d="M91 7h4" stroke="#666" stroke-width="0.8"/>
<path d="M99 7h63" stroke="#777" stroke-width="0.9"/>
<rect x="129.5" y="3.5" width="3" height="7" fill="#555"/>
<path d="M165 7h5M167.5 4.5v5" stroke="#666" stroke-width="0.8"/>
</svg>
<div class="t" style="left:778px;top:464px;font-size:7.5px;color:#444;">100%</div>
<div class="ab" style="left:0;top:475px;width:800px;height:25px;background:linear-gradient(90deg,#d9dcc3 0%,#dbdfbb 25%,#e0e7ab 42%,#e2e8aa 70%,#e3e8ad 100%)"></div>
<div class="ab" style="left:276px;top:475px;width:30px;height:25px;background:rgba(255,255,255,0.45)"></div>
<div class="ab" style="left:186px;top:498px;width:25px;height:2px;background:#2b7cd3"></div>
<div class="ab" style="left:276px;top:498px;width:30px;height:2px;background:#2b7cd3"></div>
<div class="ab" style="left:308.5px;top:498px;width:25.5px;height:2px;background:#2b7cd3"></div>
<svg class="ab" style="left:0;top:475px" width="340" height="25">
<path d="M10 8.2l4.5 -0.6v4.3h-4.5zM15.3 7.5l5.2 -0.7v5.1h-5.2zM10 12.7h4.5v4.3l-4.5 -0.6zM15.3 12.7h5.2v5.1l-5.2 -0.7z" fill="#111"/>
<circle cx="45" cy="12.3" r="4.3" fill="none" stroke="#111" stroke-width="1.3"/>
<path d="M70 7.5v2M70 15.5v2M76.5 7.5v2M76.5 15.5v2M70 8.5h6.5M70 16.5h6.5M71 10.5v5M75.5 10.5v5" fill="none" stroke="#111" stroke-width="1"/><rect x="78.5" y="8.5" width="1.8" height="1.8" fill="#111"/><path d="M79.4 11.5v6" stroke="#666" stroke-width="0.7"/>
<path d="M100.5 8.5h4l1.2 1.3h7.3v8h-12.5z" fill="#f0b93a"/><rect x="100.5" y="10.5" width="12.5" height="7.5" fill="#ffd365"/><path d="M104.5 18v-3.5h4.5v3.5" fill="none" stroke="#1f8ef1" stroke-width="1.6"/>
<path d="M129.5 10.5h15v8.5h-15z" fill="#222"/><path d="M133.5 10.5v-2a3.5 3.5 0 0 1 7 0v2" fill="none" stroke="#222" stroke-width="1.2"/>
<rect x="134.5" y="12.5" width="2" height="2" fill="#f25022"/><rect x="137" y="12.5" width="2" height="2" fill="#7fba00"/><rect x="134.5" y="15" width="2" height="2" fill="#00a4ef"/><rect x="137" y="15" width="2" height="2" fill="#ffb900"/>
<path d="M160.5 10l7.7 -4.5l7.8 4.5v8.5h-15.5z" fill="#1c8fe0"/><path d="M160.5 10l7.7 5l7.8 -5" fill="#56b5f5" stroke="#fff" stroke-width="0.6"/>
<circle cx="198.5" cy="12.5" r="7.3" fill="#1b7fd6"/>
<path d="M192 10.5a7.3 7.3 0 0 1 13.8 2.5h-5.5a3.5 3.5 0 0 0-6.5-1.5z" fill="#52c36a"/>
<path d="M194.5 12.5a4 4 0 0 0 6.5 3.2a6 6 0 0 1-6.5-3.2z" fill="#9fe0f5"/>
<circle cx="199" cy="13.5" r="2.6" fill="#dcdfb4"/>
<rect x="224" y="6" width="11" height="14" fill="#4a6b8a"/><rect x="225.5" y="7.5" width="8" height="3" fill="#b9d3ee"/>
<rect x="225.5" y="12" width="2" height="1.6" fill="#dde"/><rect x="228.5" y="12" width="2" height="1.6" fill="#dde"/><rect x="231.5" y="12" width="2" height="1.6" fill="#dde"/>
<rect x="225.5" y="15" width="2" height="1.6" fill="#dde"/><rect x="228.5" y="15" width="2" height="1.6" fill="#dde"/><rect x="231.5" y="15" width="2" height="3.6" fill="#5ab0ff"/>
<rect x="225.5" y="17.8" width="2" height="1.6" fill="#dde"/><rect x="228.5" y="17.8" width="2" height="1.6" fill="#dde"/>
<path d="M255 8.5l7 -2.5l4.5 1.5v11l-4.5 1.5l-7 -2.5zM258.2 10v6.5l4.3 1v-8.5z" fill="#e8431f" fill-rule="evenodd"/>
<rect x="287" y="6" width="11" height="13" fill="#1f9d5c"/><rect x="287" y="6" width="11" height="4.5" fill="#33c481"/><rect x="287" y="14.5" width="11" height="4.5" fill="#107c41"/>
<rect x="283" y="9" width="8.5" height="7.5" fill="#107c41"/>
<path d="M285 10.8l4.5 4M289.5 10.8l-4.5 4" stroke="#fff" stroke-width="1.1"/>
<path d="M315 13c0-4 4-6.5 8-6s5.5 3.5 4 6c-1 1.5-3 0.5-4 2s0 3-2 3.5c-3 0.5-6-1.5-6-5.5z" fill="#e9f2f8" stroke="#9cb" stroke-width="0.6"/>
<circle cx="318.5" cy="11.5" r="1.1" fill="#e33"/><circle cx="321.5" cy="9.5" r="1.1" fill="#3a3"/><circle cx="324.5" cy="10.5" r="1.1" fill="#36f"/><circle cx="318.5" cy="15" r="1.1" fill="#fc0"/>
<path d="M322 18l8 -12" stroke="#d48a3a" stroke-width="1.5"/>
</svg>
<svg class="ab" style="left:500px;top:475px" width="300" height="25">
<circle cx="7.5" cy="11.5" r="5.5" fill="#f7b731"/><path d="M5 16.5c-3 0-3.5-4 -0.5-4.5c0.5-3 4.5-3.5 5.8-1c2.5-0.5 4 1 3.5 3c1.5 0.5 1 2.5 -0.5 2.5z" fill="#dfe9f2" stroke="#b8c9d8" stroke-width="0.4"/>
<path d="M107.5 14l4 -4l4 4" fill="none" stroke="#222" stroke-width="1.1"/>
<rect x="128.5" y="9" width="5.5" height="6.5" rx="2.5" fill="none" stroke="#222" stroke-width="0.9"/><path d="M127 8c0-1 1-1.5 1.5-1.5M135.5 8c0-1-1-1.5-1.5-1.5M127 16.5c0 1 1 1.5 1.5 1.5M135.5 16.5c0 1-1 1.5-1.5 1.5" fill="none" stroke="#222" stroke-width="0.8"/>
<path d="M146 16.5h8.5a2.5 2.5 0 0 0 0-5a3.8 3.8 0 0 0-7-0.5a2.8 2.8 0 0 0-1.5 5.5z" fill="none" stroke="#222" stroke-width="1"/>
<path d="M167.5 17a9 9 0 0 1 9-9M169.5 17a7 7 0 0 1 7-7M171.5 17a5 5 0 0 1 5-5M173.5 17a3 3 0 0 1 3-3" fill="none" stroke="#333" stroke-width="0.8"/>
<rect x="186.5" y="10.5" width="9" height="5.5" fill="none" stroke="#222" stroke-width="1"/><rect x="187.5" y="11.5" width="6" height="3.5" fill="#222"/><rect x="196" y="12" width="1" height="2.5" fill="#222"/>
<path d="M274.5 7.5h10v7h-6l-4 3z" fill="#222"/><path d="M276 9.5h7M276 11.5h7" stroke="#e3e6b2" stroke-width="0.7"/>
<circle cx="284" cy="16.5" r="5.5" fill="#d5d7b5" stroke="#555" stroke-width="0.7"/>
</svg>
<div class="t" style="left:520px;top:484px;font-size:9px;color:#222;">83°F</div>
<div class="t" style="left:542.5px;top:484px;font-size:9px;color:#222;">Mostly sunny</div>
<div class="t" style="left:706px;top:484px;font-size:7.5px;color:#222;">ไทย</div>
<div class="t" style="left:744.5px;top:477.5px;font-size:8.5px;color:#222;transform:translateX(-50%);">8:29 AM</div>
<div class="t" style="left:745px;top:489px;font-size:8.5px;color:#222;transform:translateX(-50%);">2021-10-03</div>
<div class="t" style="left:784px;top:488.5px;font-size:7px;color:#222;transform:translateX(-50%);">23</div>
<div class="ab" style="left:581.5px;top:122px;width:218.5px;height:338.5px;background:#e6e6e6"></div><div class="ab" style="left:581px;top:128px;width:1px;height:332px;background:#c8c8c8"></div>
<div class="t" style="left:590.5px;top:139.5px;font-size:12.5px;color:#217346;">เขตข้อมูล PivotTable</div>
<svg class="ab" style="left:756.3px;top:141.5px" width="6" height="3"><path d="M0 0h6l-3.0 3z" fill="#666"/></svg>
<svg class="ab" style="left:781px;top:138.5px" width="9" height="9"><path d="M1 1l7 7M8 1l-7 7" stroke="#555" stroke-width="1"/></svg>
<div class="t" style="left:590.5px;top:162px;font-size:7.5px;color:#444;transform:scaleX(0.81);transform-origin:0 50%;">เลือกเขตข้อมูลเพื่อเพิ่มลงในรายงาน:</div>
<div class="ab" style="left:764.3px;top:157.2px;width:27px;height:17.3px;background:#fff"></div>
<svg class="ab" style="left:768px;top:160px" width="22" height="12"><circle cx="5.5" cy="6" r="2.2" fill="none" stroke="#777" stroke-width="1.6"/><path d="M5.5 1.5v1.5M5.5 9v1.5M1 6h1.5M8.5 6h1.5M2.3 2.8l1 1M7.7 8.2l1 1M2.3 9.2l1-1M7.7 3.8l1-1" stroke="#777" stroke-width="1.2"/><path d="M14.5 5h4l-2 2.5z" fill="#777"/></svg>
<div class="ab" style="left:589.5px;top:183.3px;width:201.5px;height:12.2px;background:#fff;border:1px solid #b8b8b8"></div>
<div class="t" style="left:591.5px;top:186px;font-size:7.5px;color:#555;">ค้นหา</div>
<svg class="ab" style="left:781px;top:184.5px" width="10" height="10"><circle cx="5.8" cy="4" r="2.6" fill="none" stroke="#2b7cd3" stroke-width="1.1"/><path d="M3.8 6l-2.5 2.8" stroke="#2b7cd3" stroke-width="1.4"/></svg>
<div class="ab" style="left:589px;top:206.8px;width:202.2px;height:87.2px;background:#fff"></div>
<div class="ab" style="left:590.2px;top:209.50px;width:8.4px;height:8.4px;background:#fff;border:1px solid #9a9a9a"></div>
<div class="t" style="left:602.5px;top:210.39999999999998px;font-size:7.5px;color:#555;transform:scaleX(0.93);transform-origin:0 50%;">ผู้จำหน่าย/ลูกค้า</div>
<div class="ab" style="left:590.2px;top:220.60px;width:8.4px;height:8.4px;background:#fff;border:1px solid #9a9a9a"></div>
<svg class="ab" style="left:590.5px;top:220.80px" width="9" height="9"><path d="M1.8 4.5l2 2l3.6 -4.5" fill="none" stroke="#333" stroke-width="0.9"/></svg>
<div class="t" style="left:602.5px;top:221.49999999999997px;font-size:7.5px;color:#333;transform:scaleX(0.93);transform-origin:0 50%;font-weight:bold;">รายการ</div>
<div class="ab" style="left:590.2px;top:231.70px;width:8.4px;height:8.4px;background:#fff;border:1px solid #9a9a9a"></div>
<svg class="ab" style="left:590.5px;top:231.90px" width="9" height="9"><path d="M1.8 4.5l2 2l3.6 -4.5" fill="none" stroke="#333" stroke-width="0.9"/></svg>
<div class="t" style="left:602.5px;top:232.59999999999997px;font-size:7.5px;color:#333;transform:scaleX(0.93);transform-origin:0 50%;font-weight:bold;">lot no</div>
<div class="ab" style="left:590.2px;top:242.80px;width:8.4px;height:8.4px;background:#fff;border:1px solid #9a9a9a"></div>
<div class="t" style="left:602.5px;top:243.7px;font-size:7.5px;color:#555;transform:scaleX(0.93);transform-origin:0 50%;">หน่วย</div>
<div class="ab" style="left:590.2px;top:253.90px;width:8.4px;height:8.4px;background:#fff;border:1px solid #9a9a9a"></div>
<svg class="ab" style="left:590.5px;top:254.10px" width="9" height="9"><path d="M1.8 4.5l2 2l3.6 -4.5" fill="none" stroke="#333" stroke-width="0.9"/></svg>
<div class="t" style="left:602.5px;top:254.79999999999995px;font-size:7.5px;color:#333;transform:scaleX(0.93);transform-origin:0 50%;font-weight:bold;">เข้า</div>
<div class="ab" style="left:590.2px;top:265.00px;width:8.4px;height:8.4px;background:#fff;border:1px solid #9a9a9a"></div>
<svg class="ab" style="left:590.5px;top:265.20px" width="9" height="9"><path d="M1.8 4.5l2 2l3.6 -4.5" fill="none" stroke="#333" stroke-width="0.9"/></svg>
<div class="t" style="left:602.5px;top:265.9px;font-size:7.5px;color:#333;transform:scaleX(0.93);transform-origin:0 50%;font-weight:bold;">ออก</div>
<div class="ab" style="left:590.2px;top:276.10px;width:8.4px;height:8.4px;background:#fff;border:1px solid #9a9a9a"></div>
<div class="t" style="left:602.5px;top:276.99999999999994px;font-size:7.5px;color:#555;transform:scaleX(0.93);transform-origin:0 50%;">ถึงรายการ</div>
<div class="ab" style="left:590.2px;top:287.20px;width:8.4px;height:8.4px;background:#fff;border:1px solid #9a9a9a"></div>
<div class="t" style="left:602.5px;top:288.09999999999997px;font-size:7.5px;color:#555;transform:scaleX(0.93);transform-origin:0 50%;">ถึงLOT</div>
<div class="ab" style="left:781.3px;top:206.8px;width:10px;height:87.2px;background:#f0f0f0"></div>
<div class="ab" style="left:781.3px;top:208.8px;width:9.6px;height:8.7px;background:#fff;border:1px solid #c8c8c8"></div>
<svg class="ab" style="left:784px;top:211.5px" width="5" height="3"><path d="M0 3h4.5l-2.25 -2.5z" fill="#555"/></svg>
<div class="ab" style="left:781.3px;top:228.5px;width:9.6px;height:20.1px;background:#fff;border:1px solid #c8c8c8"></div>
<div class="ab" style="left:781.3px;top:284.4px;width:9.6px;height:8.8px;background:#fff;border:1px solid #c8c8c8"></div>
<svg class="ab" style="left:784px;top:287.5px" width="5" height="3"><path d="M0 0h4.5l-2.25 2.5z" fill="#555"/></svg>
<div class="ab" style="left:590px;top:304.5px;width:201px;height:0;border-top:1px dotted #bdbdbd"></div>
<div class="t" style="left:591px;top:309px;font-size:7.5px;color:#444;transform:scaleX(0.83);transform-origin:0 50%;">ลากเขตข้อมูลไปมาระหว่างพื้นที่ด้านล่าง:</div>
<svg class="ab" style="left:592px;top:328px" width="10" height="9"><path d="M0.5 0.5h8l-3 3.5v4.5l-2 -1v-3.5z" fill="#666"/></svg>
<div class="t" style="left:606px;top:328.5px;font-size:7.5px;color:#333;transform:scaleX(0.88);transform-origin:0 50%;">ตัวกรอง</div>
<svg class="ab" style="left:694px;top:328px" width="8" height="9"><path d="M1.5 0.5v8M4.5 0.5v8" stroke="#aaa" stroke-width="1.5"/></svg>
<div class="t" style="left:707px;top:328.5px;font-size:7.5px;color:#333;transform:scaleX(0.88);transform-origin:0 50%;">คอลัมน์</div>
<div class="ab" style="left:591px;top:340.4px;width:96.3px;height:33.6px;background:#fff"></div>
<div class="ab" style="left:692.2px;top:340.4px;width:99px;height:33.6px;background:#fff"></div>
<div class="ab" style="left:689.5px;top:326px;width:1px;height:102px;background:#d0d0d0"></div>
<div class="ab" style="left:590px;top:377px;width:201px;height:1px;background:#d0d0d0"></div>
<div class="ab" style="left:693.5px;top:341.8px;width:97.20000000000005px;height:11.5px;background:#fff;border:1px solid #c8c8c8"></div>
<div class="t" style="left:698.5px;top:342.8px;font-size:9.5px;color:#777;">Σ</div>
<div class="t" style="left:708.5px;top:343.8px;font-size:7.5px;color:#333;transform:scaleX(0.88);transform-origin:0 50%;">ค่า</div>
<svg class="ab" style="left:781.2px;top:346.05px" width="5" height="3"><path d="M0 0h5l-2.5 3z" fill="#555"/></svg>
<svg class="ab" style="left:592px;top:382.5px" width="9" height="9"><path d="M0.5 1.5h7M0.5 4h7M0.5 6.5h7" stroke="#999" stroke-width="1.1"/></svg>
<div class="t" style="left:606px;top:383px;font-size:7.5px;color:#555;transform:scaleX(0.88);transform-origin:0 50%;">แถว</div>
<div class="t" style="left:695px;top:381.5px;font-size:9.5px;color:#777;">Σ</div>
<div class="t" style="left:706px;top:383px;font-size:7.5px;color:#333;transform:scaleX(0.88);transform-origin:0 50%;">ค่า</div>
<div class="ab" style="left:591px;top:394.3px;width:96.3px;height:34.3px;background:#fff"></div>
<div class="ab" style="left:692.2px;top:394.3px;width:99px;height:34.3px;background:#fff"></div>
<div class="ab" style="left:592.4px;top:396.2px;width:93.20000000000005px;height:9.800000000000011px;background:#fff;border:1px solid #c8c8c8"></div>
<div class="t" style="left:596.4px;top:398.2px;font-size:7.5px;color:#333;transform:scaleX(0.88);transform-origin:0 50%;">รายการ</div>
<svg class="ab" style="left:676.1px;top:399.6px" width="5" height="3"><path d="M0 0h5l-2.5 3z" fill="#555"/></svg>
<div class="ab" style="left:592.4px;top:408.5px;width:93.20000000000005px;height:10.5px;background:#fff;border:1px solid #c8c8c8"></div>
<div class="t" style="left:596.4px;top:410.5px;font-size:7.5px;color:#333;transform:scaleX(0.88);transform-origin:0 50%;">lot no</div>
<svg class="ab" style="left:676.1px;top:412.25px" width="5" height="3"><path d="M0 0h5l-2.5 3z" fill="#555"/></svg>
<div class="ab" style="left:693.5px;top:396.2px;width:97.20000000000005px;height:9.800000000000011px;background:#fff;border:1px solid #c8c8c8"></div>
<div class="t" style="left:697.5px;top:398.2px;font-size:7.5px;color:#333;transform:scaleX(0.88);transform-origin:0 50%;">ผลรวม ของ เข้า</div>
<svg class="ab" style="left:781.2px;top:399.6px" width="5" height="3"><path d="M0 0h5l-2.5 3z" fill="#555"/></svg>
<div class="ab" style="left:693.5px;top:408.5px;width:97.20000000000005px;height:10.5px;background:#fff;border:1px solid #c8c8c8"></div>
<div class="t" style="left:697.5px;top:410.5px;font-size:7.5px;color:#333;transform:scaleX(0.88);transform-origin:0 50%;">ผลรวม ของ ออก</div>
<svg class="ab" style="left:781.2px;top:412.25px" width="5" height="3"><path d="M0 0h5l-2.5 3z" fill="#555"/></svg>
<div class="ab" style="left:591.5px;top:444.3px;width:8px;height:8px;background:#fff;border:1px solid #8a8a8a"></div>
<div class="t" style="left:603px;top:444.5px;font-size:7.5px;color:#333;transform:scaleX(0.8);transform-origin:0 50%;">เลื่อนเวลาการอัปเดตเค้าโครง</div>
<div class="ab" style="left:767px;top:441.8px;width:24px;height:12.2px;background:#f3f3f3"></div>
<div class="t" style="left:779px;top:444.5px;font-size:7px;color:#999;transform:translateX(-50%);">อัปเดต</div>
<div class="ab" style="left:277px;top:124px;width:12px;height:16px;background:#ffff00"></div>
<div class="t" style="left:278.5px;top:126px;font-size:12.5px;color:#ff0000;">1</div>
<div class="ab" style="left:291px;top:129px;width:200px;height:33.19999999999999px;background:#ffff00;color:#ff0000;overflow:hidden"></div>
<div class="t" style="left:292px;top:129.5px;font-size:13px;color:#ff0000;">Pivot Table <span style="font-size:8.3px">สามารถ นำค่าคอลัม </span>B-C <span style="font-size:8.3px">แล้ว</span></div>
<div class="t" style="left:292px;top:147.5px;font-size:13px;color:#ff0000;"><span style="font-size:8.3px">ปรากฎผลอยู่ใน คอลัม</span>D <span style="font-size:8.3px">ได้ไหมครับ ทำอย่างไร</span></div>
<div class="ab" style="left:351px;top:173px;width:158.60000000000002px;height:89.69999999999999px;background:#ffff00;color:#ff0000;overflow:hidden"></div>
<div class="t" style="left:351.5px;top:175px;font-size:11.5px;color:#ff0000;">2 <span style="font-size:8.3px">จากนั้น ถ้าค่าที่ได้ในคอลัม</span>D<span style="font-size:8.3px">.เป็น</span>0 <span style="font-size:8.3px">หรือ</span></div>
<div class="t" style="left:351.5px;top:194px;font-size:11.5px;color:#ff0000;"><span style="font-size:8.3px">ผลรวม คอลัม </span>B <span style="font-size:8.3px">หรือ </span>C <span style="font-size:8.3px">เป็น</span>0 <span style="font-size:8.3px">เราสามารถ</span></div>
<div class="t" style="left:351.5px;top:213px;font-size:8.3px;color:#ff0000;">ทำให้แถวๆนั้นทั้งแถวไม่แสดงข้อมูลของทั้ง</div>
<div class="t" style="left:351.5px;top:232.5px;font-size:8.3px;color:#ff0000;">แถวเลยได้ไหม</div>
<div class="t" style="left:351.5px;top:247px;font-size:11.5px;color:#ff0000;"><span style="font-size:8.3px">((เพราะต้องการดูเฉพาะที่ไม่ใช่</span>0<span style="font-size:8.3px">))</span></div>
<div class="ab" style="left:347.8px;top:270.6px;width:181.2px;height:87.19999999999999px;background:#ffff00;color:#ff0000;overflow:hidden"></div>
<div class="t" style="left:349px;top:271px;font-size:13px;color:#ff0000;">3 Pivot Table <span style="font-size:8.3px">สามารถกลับค่า ผลรวมให้</span></div>
<div class="t" style="left:349px;top:294px;font-size:8.3px;color:#ff0000;">เป็น แสดง ผลรวมที่เป็นค่าลบ ได้ไหม แล้วทำอย่าง</div>
<div class="t" style="left:349px;top:308px;font-size:8.3px;color:#ff0000;">ไรโดยข้อมูลภายในยังเป็น <span style="font-size:13px">+</span>ปกติ</div>
<div class="ab" style="left:498px;top:0px;width:227.70000000000005px;height:60.3px;background:#ffff00;color:#ff0000;overflow:hidden"></div>
<div class="t" style="left:499px;top:-0.5px;font-size:13px;color:#ff0000;">4 Pivot Table <span style="font-size:8.3px">สามารถเพิ่ม คอลัมใหม่ แล้ว ใส่ข้อมูลบน</span></div>
<div class="t" style="left:499px;top:19px;font-size:13px;color:#ff0000;"><span style="font-size:8.3px">หน้าแสดง </span>pivot table <span style="font-size:8.3px">โดยไม่ต้อง เค้าไปเพิ่มข้อมูลภายใน</span></div>
<div class="t" style="left:499px;top:37px;font-size:13px;color:#ff0000;"><span style="font-size:8.3px">เลยได้ไหม (โดยที่ข้อมูลนั้นจะยังแสดงบน</span>pivot <span style="font-size:8.3px">ตลอด</span></div>
<svg class="ab" style="left:725.5px;top:5px" width="8" height="10"><path d="M0 5.5h6" stroke="#fff" stroke-width="0.9"/></svg>
</body></html>
